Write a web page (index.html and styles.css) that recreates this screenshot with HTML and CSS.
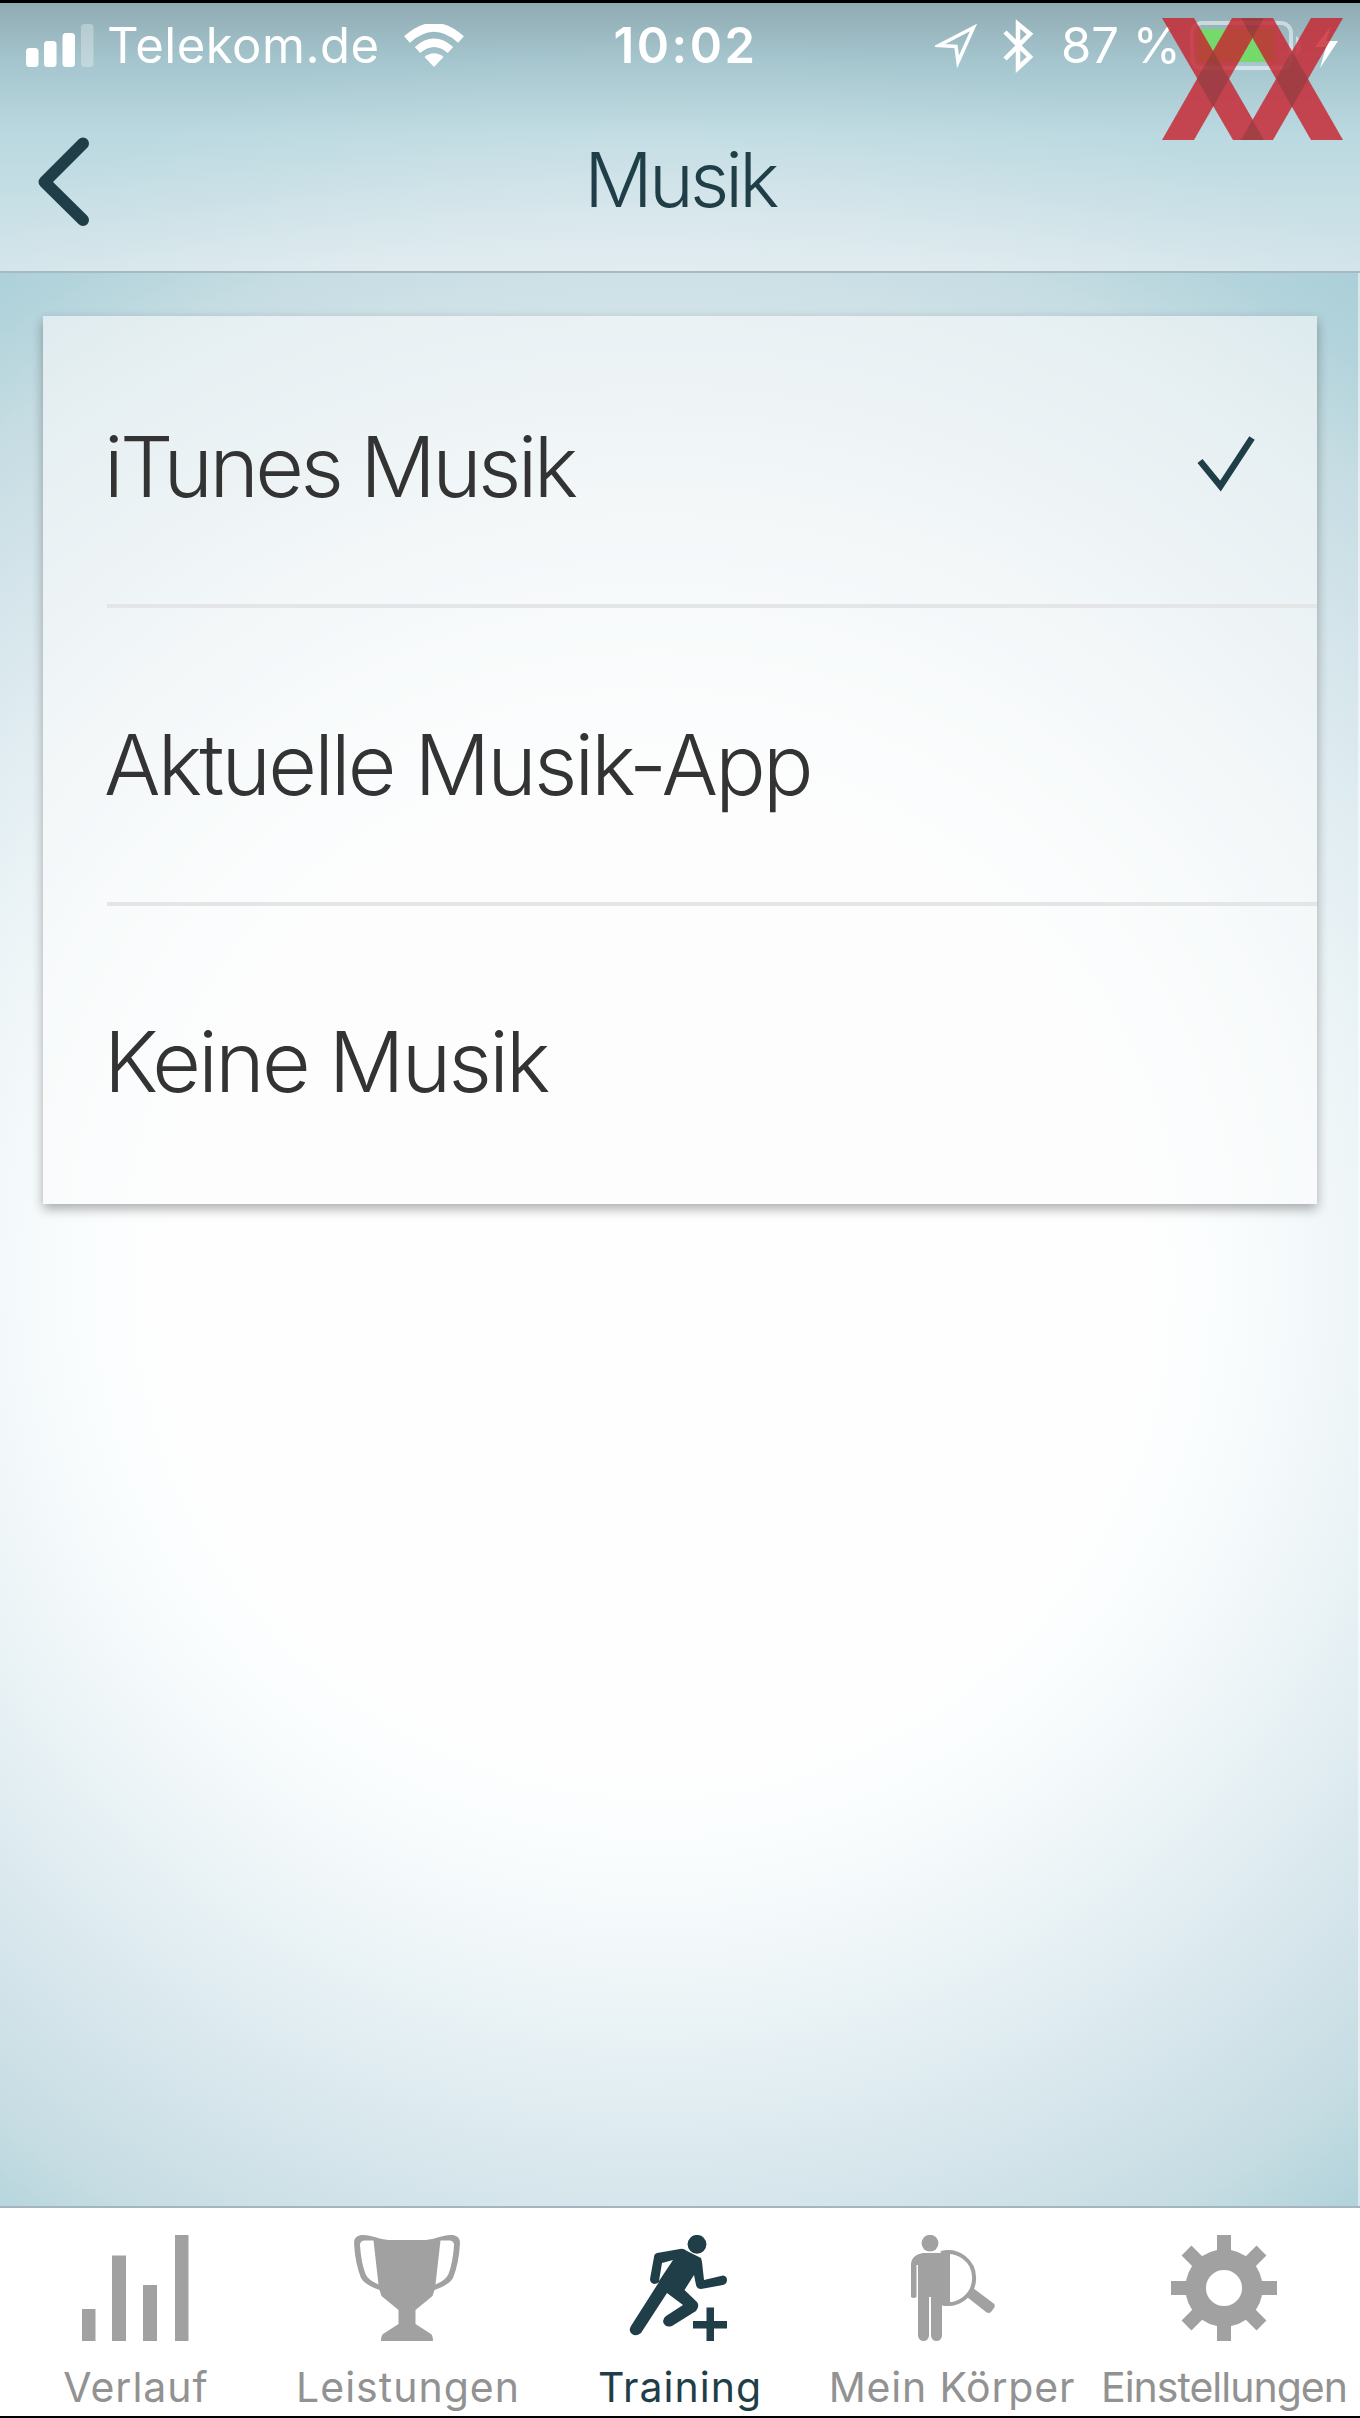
FILE: index.html
```html
<!DOCTYPE html>
<html lang="de">
<head>
    <meta charset="UTF-8">
    <meta name="viewport" content="width=device-width, initial-scale=1.0">
    <title>Musik</title>
    <link rel="stylesheet" href="styles.css">
</head>
<body>
<div class="screen">

    <header class="header">
        <!-- Status bar -->
        <div class="status">
            <div class="status-left">
                <svg width="68" height="44" viewBox="0 0 68 44" fill="#fff">
                    <rect x="0" y="24" width="12.5" height="19" rx="3.5"/>
                    <rect x="18" y="17" width="12.5" height="26" rx="3.5"/>
                    <rect x="36.5" y="9" width="12.5" height="34" rx="3.5"/>
                    <rect x="55" y="0" width="12.5" height="43" rx="3.5" opacity=".3"/>
                </svg>
                <span class="carrier">Telekom.de</span>
                <svg class="wifi" width="60" height="44" viewBox="0 0 60 44">
                    <path d="M3 15.5Q30 -9 57 15.5" fill="none" stroke="#fff" stroke-width="8.5"/>
                    <path d="M13.5 26Q30 11.5 46.5 26" fill="none" stroke="#fff" stroke-width="8"/>
                    <path d="M20.5 33Q30 25.5 39.5 33L30 43Z" fill="#fff"/>
                </svg>
            </div>
            <span class="time">10:02</span>
            <div class="status-right">
                <svg width="42" height="44" viewBox="0 0 42 44">
                    <path d="M38.5 3.5L4 21.5L21 22.5L23 38Z" fill="none" stroke="#fff" stroke-width="3.5"/>
                </svg>
                <svg class="bluetooth" width="32" height="54" viewBox="0 0 32 54">
                    <path d="M3 13L28 38L16 49V5L28 15L3 40" fill="none" stroke="#fff" stroke-width="4.5"/>
                </svg>
                <span class="percent">87 %</span>
                <svg class="battery" width="150" height="50" viewBox="0 0 150 50">
                    <rect x="2" y="2" width="99" height="45" rx="10" fill="none" stroke="#fff" stroke-opacity=".5" stroke-width="4"/>
                    <rect x="7" y="8" width="78" height="33" rx="3" fill="#75da6b"/>
                    <path d="M106 15Q111 18 111 24.5T106 34Z" fill="#fff" opacity=".5"/>
                    <path d="M141 5L125 26H136L130 47L148 20H136Z" fill="#fff"/>
                </svg>
            </div>
        </div>

        <!-- Title bar -->
        <div class="titlebar">
            <svg class="back" width="54" height="92" viewBox="0 0 54 92">
                <path d="M46 7.500L7.500 46L46 84" fill="none" stroke="#1f3e48" stroke-width="12" stroke-linecap="round" stroke-linejoin="round"/>
            </svg>
            <h1 class="title">Musik</h1>
        </div>
    </header>

    <svg class="logo" width="182" height="122" viewBox="0 0 182 122">
        <g fill="#c72530" opacity=".82">
            <path d="M0 0H32L102.500 122H71Z"/>
            <path d="M70 0H102L32 122H0Z"/>
            <path d="M79 0H111L181 122H149Z"/>
            <path d="M149 0H181L111 122H79Z"/>
        </g>
        <g fill="#563533" opacity=".3">
            <path d="M51 33L67 61L51 89L35 61Z"/>
            <path d="M130 33L146 61L130 89L114 61Z"/>
            <path d="M79 0H102L90.500 20Z"/>
            <path d="M79 122H102L90.500 102Z"/>
        </g>
    </svg>

    <main class="content">
        <ul class="card">
            <li class="row">
                <span class="itunes">iTunes Musik</span>
                <svg class="check" width="58" height="56" viewBox="0 0 58 56">
                    <path d="M3 25L23.500 50L55 2" fill="none" stroke="#1f3e48" stroke-width="6.500"/>
                </svg>
            </li>
            <li class="row"><span class="app">Aktuelle Musik-App</span></li>
            <li class="row"><span class="none">Keine Musik</span></li>
        </ul>
    </main>

    <!-- Tab bar -->
    <nav class="tabs">
        <a class="tab">
            <svg width="108" height="106" viewBox="-1 0 108 106" fill="currentColor">
                <rect x="-1" y="74" width="13.5" height="32"/>
                <rect x="29" y="20.5" width="14" height="85.5"/>
                <rect x="60" y="50" width="14" height="56"/>
                <rect x="92" y="0" width="13.5" height="106"/>
            </svg>
            <span class="verlauf">Verlauf</span>
        </a>
        <a class="tab">
            <svg class="cup" width="106" height="106" viewBox="0 0 106 106" fill="currentColor">
                <path fill-rule="evenodd" d="M7 0C15 -.5 25 4 34 5H72C81 4 91 -.5 99 0Q106 1 106 8Q105 28 99 43Q95 50 80.500 55L78.500 61L61.500 75V89L77 99Q79 101 79 106H27Q27 101 29 99L44.500 89V75L27.500 61L25.500 55Q11 50 7 43Q1 28 0 8Q0 1 7 0ZM19.500 5.500H10Q6 6 6 10Q7 27 11.500 39Q14 45 24.500 49.500ZM86.500 5.500L81.500 49.500Q92 45 94.500 39Q99 27 100 10Q100 6 96 5.500Z"/>
            </svg>
            <span class="leistungen">Leistungen</span>
        </a>
        <a class="tab active">
            <svg width="106" height="106" viewBox="0 0 106 106" fill="currentColor">
                <circle cx="70" cy="9.3" r="9.4"/>
                <path transform="translate(-2)" fill-rule="evenodd" d="M32 18L55 14Q58 13 62 16L76 23L77 27L79 45L98 40.500Q102 41 102 45Q102 49 98 50L76 54Q72 54 71 50L69 40L59.500 55L72 67Q75 71 71 76L47 91Q41 93 38.500 88Q37 84 41 81L58 70L42 58L16 98Q11 102 7 99Q3 96 6 91L34 47Q32 49 29 49Q25 48 25 44L29 22Q29 19 32 18ZM48 25L37 28L34 46Z"/>
                <path transform="translate(-2)" d="M81.500 72.500H89V86H102V93.500H89V106H81.500V93.500H68V86H81.500Z"/>
            </svg>
            <span class="training">Training</span>
        </a>
        <a class="tab">
            <svg width="106" height="106" viewBox="0 0 106 106" fill="currentColor">
                <circle cx="31" cy="8.2" r="8.4"/>
                <path d="M24 18H40L51 17V69H43V101Q42 106 37.500 106Q33 106 32 101V62H30V101Q29 106 24.500 106Q20 106 19 101V30H17.500V62Q15 64 12 62V30Q12 20 24 18Z"/>
                <path d="M42 18A26 26 0 1 1 42 68" fill="none" stroke="currentColor" stroke-width="4"/>
                <path d="M74 53L94 68Q97 70 95 73L92 77Q90 79 87 77L68 62Z"/>
            </svg>
            <span class="koerper">Mein Körper</span>
        </a>
        <a class="tab">
            <svg width="106" height="106" viewBox="0 0 106 106" fill="none" stroke="currentColor">
                <circle cx="53" cy="53" r="28.3" stroke-width="20.5"/>
                <path d="M53 0V20M53 86V106M0 53H20M86 53H106M15.500 15.500L30 30M76 76L90.500 90.500M90.500 15.500L76 30M30 76L15.500 90.500" stroke-width="14"/>
            </svg>
            <span class="einstellungen">Einstellungen</span>
        </a>
    </nav>

</div>
</body>
</html>
```
FILE: styles.css
```css
* { box-sizing: border-box; }
body { margin: 0; font-family: Inter, "Liberation Sans", sans-serif; }
svg { display: block; flex: none; }

.screen {
    position: relative;
    display: flex;
    flex-direction: column;
    width: 1360px;
    height: 2418px;
    border-top: 3px solid #000;
    border-bottom: 2px solid #000;
    background: radial-gradient(circle at 48% 1275px, #fefefe 490px, #fafdfe 570px, #f1f7f9 680px, #e4eff3 800px, #d3e4ea 950px, #c6dde3 1060px, #b2d3db 1160px, #a8ced7 1250px);
}

/* header */
.header {
    height: 270px;
    border-bottom: 2px solid #a7b9c2;
    background: linear-gradient(rgba(128,148,155,.6), rgba(160,185,193,.38) 60px, rgba(220,236,241,.35) 130px, rgba(240,244,247,.6));
}
.status {
    display: grid;
    grid-template-columns: 1fr auto 1fr;
    height: 86px;
    padding: 0 20px 0 26px;
    align-items: center;
    color: #fff;
    font-size: 49px;
    line-height: 60px;
}
.status-left, .status-right { display: flex; align-items: center; }
.status-right { justify-content: flex-end; }
.status svg { margin-bottom: 1px; }
.carrier { margin-left: 13px; letter-spacing: .5px; }
.status .wifi { margin-left: 24px; }
.time { padding-left: 5px; font-weight: 600; letter-spacing: 2.5px; }
.status .bluetooth { margin-left: 25px; }
.percent { margin-left: 27px; }
.status .battery { margin-left: 9px; }
.titlebar { position: relative; display: flex; justify-content: center; padding-top: 40px; }
.back { position: absolute; left: 37px; top: 47px; }
.title { margin: 0; color: #1f3e48; font-size: 76px; line-height: 100px; font-weight: 300; letter-spacing: -3.8px; }
.logo { position: absolute; left: 1162px; top: 15px; }

/* list */
.content { flex: 1; padding: 43px 43px 0; border-right: 2px solid rgba(255,255,255,.5); }
.card {
    margin: 0;
    padding: 0 0 0 64px;
    width: 1274px;
    list-style: none;
    background: rgba(252,252,252,.58);
    box-shadow: 0 5px 11px rgba(0,0,0,.32);
}
.row {
    display: flex;
    justify-content: space-between;
    align-items: flex-end;
    height: 298px;
    padding: 0 62px 95px 0;
    border-bottom: 4px solid #e4e5e6;
    color: #333;
    font-size: 84px;
    line-height: 84px;
    font-weight: 330;
}
.row:first-child { height: 292px; }
.row:last-child { border-bottom: 0; padding-bottom: 100px; }
.row span { margin-left: -3px; }
.itunes { letter-spacing: -3.6px; }
.app { letter-spacing: -2.8px; }
.none { letter-spacing: -2.7px; }
.check { margin-bottom: 17px; }

/* tab bar */
.tabs { display: flex; height: 210px; border-top: 2px solid #a3b5bf; background: #fff; }
.tab {
    display: flex;
    flex-direction: column;
    align-items: center;
    width: 272px;
    padding-top: 27px;
    color: #a1a1a1;
    font-size: 41px;
    line-height: 50px;
    white-space: nowrap;
}
.tab span { margin-top: 21px; color: #929292; }
.tab.active, .tab.active span { color: #1f3e48; }
.cup { margin-right: 2px; }
.verlauf, .leistungen, .training { letter-spacing: 1px; }
.koerper { letter-spacing: .8px; }
.einstellungen { letter-spacing: -1px; }
```
